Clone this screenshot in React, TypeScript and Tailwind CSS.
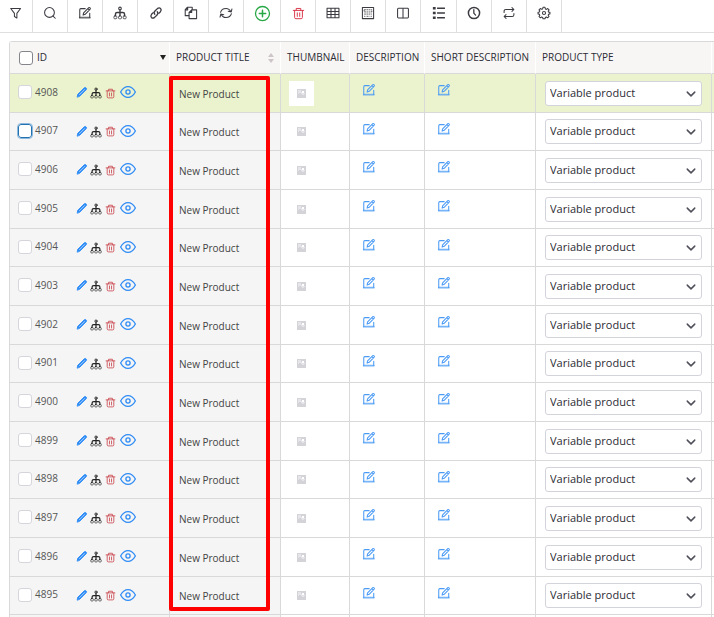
import type { ReactNode } from "react";
import clsx from "clsx";

interface IconProps {
  className?: string;
  children: ReactNode;
}

/** Line icon on a 16px grid, coloured by the current text colour. */
function Icon({ className, children }: IconProps) {
  return (
    <svg
      viewBox="0 0 16 16"
      fill="none"
      stroke="currentColor"
      strokeWidth={1.2}
      strokeLinecap="round"
      strokeLinejoin="round"
      aria-hidden="true"
      className={clsx("shrink-0", className)}
    >
      {children}
    </svg>
  );
}

const editPaths = (
  <>
    <path d="M8.2 3H3.2Q2 3 2 4.2V13M13.4 8.2V13" />
    <path d="M2 13.4H13.4" strokeWidth={2} opacity={0.75} />
    <path d="M5.8 10.4L6.4 7.8L12.3 1.9Q13 1.3 13.8 2.1Q14.5 2.8 13.9 3.6L8.2 9.5Z M11.3 3L13 4.6" />
  </>
);

const sitemapPaths = (
  <>
    <circle cx="8" cy="2.8" r="1.5" />
    <path d="M8 4.4V11M2.8 11V9.2Q2.8 7.4 4.8 7.4H11.2Q13.2 7.4 13.2 9.2V11" strokeWidth={1.6} />
    <rect x="1" y="11.4" width="3.4" height="3.2" rx="1" strokeWidth={0.9} />
    <rect x="6.3" y="11.4" width="3.4" height="3.2" rx="1" strokeWidth={0.9} />
    <rect x="11.6" y="11.4" width="3.4" height="3.2" rx="1" strokeWidth={0.9} />
  </>
);

const trashPaths = (
  <>
    <path d="M1.6 4.2H14.4M5.2 4V1.8H10.8V4" />
    <path d="M3.2 4.4V12.8Q3.2 14.4 4.8 14.4H11.2Q12.8 14.4 12.8 12.8V4.4M6.5 7.2V11.6M9.5 7.2V11.6" />
  </>
);

interface Tool {
  label: string;
  width: string;
  icon: ReactNode;
  color?: string;
  size?: string;
}

const tools: Tool[] = [
  { label: "Filter", width: "w-[33px]", icon: <path d="M2 2.8H13.2L9 8.4V13.8L6.2 12V8.4Z" /> },
  {
    label: "Search",
    width: "w-[35px]",
    icon: (
      <>
        <circle cx="7.4" cy="7.4" r="5.6" />
        <path d="M11.5 11.5L14 14" />
      </>
    ),
  },
  { label: "Edit", width: "w-[35px]", icon: editPaths },
  { label: "Variations", width: "w-[35px]", icon: sitemapPaths },
  {
    label: "Link",
    width: "w-[36px]",
    icon: (
      <>
        <path d="M6.6 9.4Q5 7.6 6.8 5.8L9.6 3Q11.6 1.4 13.2 2.9Q14.7 4.5 13.1 6.5L11.2 8.4" strokeWidth={1.5} />
        <path d="M9.4 6.6Q11 8.4 9.2 10.2L6.4 13Q4.4 14.6 2.8 13.1Q1.3 11.5 2.9 9.5L4.8 7.6" strokeWidth={1.5} />
      </>
    ),
  },
  {
    label: "Copy",
    width: "w-[35px]",
    icon: (
      <>
        <path d="M5.6 11H1.4V4.2L4 1.4H9.4V4M4.2 1.6V4.4H1.6" />
        <path d="M5.8 7.2L8.8 4.4H14.4V14.4H5.8ZM8.8 4.6V7.4H6" />
      </>
    ),
  },
  {
    label: "Refresh",
    width: "w-[35px]",
    icon: (
      <>
        <path d="M1.8 7.2Q3 2.8 8 2.8Q11.8 2.8 13.6 6.6M14.8 3.4L14 6.8L10.6 6" />
        <path d="M14.2 8.8Q13 13.2 8 13.2Q4.2 13.2 2.4 9.4M1.2 12.6L2 9.2L5.4 10" />
      </>
    ),
  },
  {
    label: "Add",
    width: "w-[37px]",
    color: "text-[#28a745]",
    size: "size-[17px]",
    icon: (
      <>
        <circle cx="8" cy="8" r="6.6" />
        <path d="M8 5V11M5 8H11" strokeWidth={1.4} />
      </>
    ),
  },
  { label: "Delete", width: "w-[35px]", color: "text-[#d9364a]", size: "size-[13px]", icon: trashPaths },
  {
    label: "Grid",
    width: "w-[35px]",
    icon: <path d="M1.2 2.5H14.8V13.5H1.2ZM1.2 6.2H14.8M1.2 9.8H14.8M5.7 2.5V13.5M10.3 2.5V13.5" />,
  },
  {
    label: "Form",
    width: "w-[35px]",
    icon: (
      <>
        <rect x="1.6" y="1.6" width="12.8" height="12.8" />
        <path
          d="M3.6 4.3H12.4M3.6 4.3V6.8H12.4V4.3M3.6 9.2H12.4M3.6 11.8H5M6.4 11.8H9.6M11 11.8H12.4"
          strokeWidth={0.9}
          strokeLinecap="butt"
          strokeDasharray="2 0.6"
        />
      </>
    ),
  },
  {
    label: "Columns",
    width: "w-[35px]",
    icon: (
      <>
        <rect x="1.8" y="2.6" width="12.4" height="11" rx="1" />
        <path d="M8 3V13.4" />
      </>
    ),
  },
  {
    label: "List",
    width: "w-[36px]",
    icon: (
      <>
        <path d="M1 2.6H4.2M1 8H4.2M1 13.4H4.2" strokeWidth={2.8} strokeLinecap="butt" />
        <path d="M5.8 2.6H14.8M5.8 8H14.8M5.8 13.4H14.8" strokeWidth={1.5} strokeLinecap="butt" />
      </>
    ),
  },
  {
    label: "History",
    width: "w-[35px]",
    icon: (
      <>
        <circle cx="8" cy="8" r="6.4" strokeWidth={1.7} />
        <path d="M7.8 4.2V8.2L9.8 10.4" strokeWidth={1.5} />
      </>
    ),
  },
  {
    label: "Swap",
    width: "w-[35px]",
    icon: (
      <>
        <path d="M2.4 7.4V6Q2.4 4 4.4 4H13.4M11.4 1.8L13.6 4L11.4 6.2" />
        <path d="M13.6 8.6V10Q13.6 12 11.6 12H2.6M4.6 9.8L2.4 12L4.6 14.2" />
      </>
    ),
  },
  {
    label: "Settings",
    width: "w-[35px]",
    icon: (
      <>
        <path d="M6.9 1.5H9.1L9.6 3.4L10.7 3.9L12.3 2.9L13.8 4.4L12.8 6L13.3 7L14.8 7.2V9L13.3 9.4L12.8 10.5L13.7 12L12.2 13.5L10.7 12.6L9.6 13.1L9.1 14.6H6.9L6.4 13.1L5.3 12.6L3.8 13.5L2.3 12L3.2 10.5L2.7 9.4L1.2 9V7.2L2.7 6.8L3.2 5.8L2.3 4.4L3.8 2.9L5.3 3.8L6.4 3.4Z" />
        <circle cx="8" cy="8" r="1.8" />
      </>
    ),
  },
];

const products = [4908, 4907, 4906, 4905, 4904, 4903, 4902, 4901, 4900, 4899, 4898, 4897, 4896, 4895];

function Toolbar() {
  return (
    <div role="toolbar" className="flex h-[33px] border-b border-[#dfdfdf]">
      {tools.map(({ label, width, icon, color, size }) => (
        <button
          key={label}
          type="button"
          title={label}
          aria-label={label}
          className={clsx(
            "flex shrink-0 items-center justify-center border-r border-[#dfdfdf] pb-[6px]",
            width,
            color ?? "text-[#3b3b42]",
          )}
        >
          <Icon className={size ?? "size-[14px]"}>{icon}</Icon>
        </button>
      ))}
    </div>
  );
}

function RowActions() {
  return (
    <div className="ml-[18px] flex items-center text-[#2f8cf5]">
      <button type="button" aria-label="Rename">
        <Icon className="size-3">
          <path d="M1.6 14.4L2.4 11L11 2.4Q12.2 1.4 13.5 2.6Q14.7 3.8 13.6 5L5 13.6Z" fill="currentColor" />
          <path d="M4.6 11.6L11.4 4.8" stroke="#a9d2ff" />
        </Icon>
      </button>
      <button type="button" aria-label="Variations" className="ml-0.5 pt-0.5 text-[#222]">
        <Icon className="size-3">{sitemapPaths}</Icon>
      </button>
      <button type="button" aria-label="Delete" className="ml-[3px] pt-0.5 text-[#c9444b]">
        <Icon className="size-[11px]">{trashPaths}</Icon>
      </button>
      <button type="button" aria-label="View" className="ml-1">
        <Icon className="size-4">
          <path d="M.6 8Q3.6 2.6 8 2.6T15.4 8Q12.4 13.4 8 13.4T.6 8Z" strokeWidth={1.3} />
          <circle cx="8" cy="8" r="2.1" strokeWidth={1.3} />
        </Icon>
      </button>
    </div>
  );
}

function EditButton({ label }: { label: string }) {
  return (
    <button type="button" aria-label={label} className="ml-3 block pb-[6px] text-[#4b9bf5]">
      <Icon className="size-[14px]">{editPaths}</Icon>
    </button>
  );
}

const th =
  "border-r border-b border-r-white border-b-[#d9d9d9] bg-[#f7f6f5] p-0 text-left font-medium whitespace-nowrap";
const td = "border-r border-b border-[#d9d9d9] p-0";

function ProductRow({ id, highlighted, focused }: { id: number; highlighted: boolean; focused: boolean }) {
  return (
    <tr className={clsx("h-[39px] nth-[3n+2]:h-[38px]", highlighted && "bg-[#eaf3cd]")}>
      <td className={clsx(td, !highlighted && "bg-[#f5f5f5]")}>
        <div className="flex items-center pb-[2px] pl-2">
          <label className="flex items-center gap-[3px] text-[10px] text-[#555]">
            <input
              type="checkbox"
              className={clsx(
                "size-[14px] appearance-none rounded-[3px] border bg-white",
                focused ? "border-[#2271b1] outline outline-[#8bb8dc]" : "border-[#d5d5dc]",
              )}
            />
            {id}
          </label>
          <RowActions />
        </div>
      </td>
      <td className={clsx(td, "pt-[2px] pl-[9px] text-[10px] text-[#444]", !highlighted && "bg-[#f5f5f5]")}>
        New Product
      </td>
      <td className={td}>
        <div className="ml-2 flex size-[25px] items-center justify-center bg-white">
          <svg viewBox="0 0 9 9" className="size-[9px]" role="img" aria-label="No thumbnail">
            <rect width="9" height="9" fill="#d3d3d8" />
            <path d="M1 7V5H2V4H4V5H5V6H7V5H8V4H6V3H7V2H5V3H4V1H1Z" fill="#f3f3f6" opacity="0.6" />
            <rect x="5" y="2" width="2" height="2" fill="#fff" />
          </svg>
        </div>
      </td>
      <td className={td}>
        <EditButton label="Edit description" />
      </td>
      <td className={td}>
        <EditButton label="Edit short description" />
      </td>
      <td className={td}>
        <div className="relative mx-[9px]">
          <select
            aria-label={`Product type of ${id}`}
            className="block h-[25px] w-full appearance-none rounded-[3px] border border-[#d3d3db] bg-white pl-1 text-[11px] text-[#2c2c34]"
          >
            <option>Variable product</option>
            <option>Simple product</option>
          </select>
          <Icon className="pointer-events-none absolute top-2 right-[6px] size-[10px] text-[#50505a]">
            <path d="M2 5L8 11L14 5" strokeWidth={2.4} />
          </Icon>
        </div>
      </td>
      <td className="border-b border-[#d9d9d9] p-0" />
    </tr>
  );
}

export default function App() {
  return (
    <div className="overflow-hidden bg-white font-['Open_Sans','Noto_Sans',sans-serif] text-[#333]">
      <Toolbar />
      <div className="relative mt-2 ml-[9px] rounded-tl-[3px] border-t border-l border-[#d9d9d9]">
        <table className="w-full table-fixed border-separate border-spacing-0">
          <colgroup>
            <col className="w-[160px]" />
            <col className="w-[111px]" />
            <col className="w-[69px]" />
            <col className="w-[75px]" />
            <col className="w-[111px]" />
            <col className="w-[176px]" />
            <col />
          </colgroup>
          <thead className="text-[10px] text-[#2c2c34]">
            <tr className="h-8">
              <th className={th}>
                <div className="flex items-center pr-[3px] pl-[9px]">
                  <label className="flex flex-1 items-center gap-1">
                    <input
                      type="checkbox"
                      className="size-[14px] appearance-none rounded-[3px] border border-[#85858c] bg-white"
                    />
                    ID
                  </label>
                  <svg viewBox="0 0 6 5" className="h-[5px] w-[6px]" aria-hidden="true">
                    <path d="M0 0H6L3 5Z" fill="#222" />
                  </svg>
                </div>
              </th>
              <th className={th}>
                <div className="flex items-center justify-between pr-[6px] pl-[6px]">
                  PRODUCT TITLE
                  <svg viewBox="0 0 6 10" className="h-[10px] w-[6px]" aria-hidden="true">
                    <path d="M0 4L3 0L6 4ZM0 6H6L3 10Z" fill="#cdc5c7" />
                  </svg>
                </div>
              </th>
              <th className={clsx(th, "pl-[6px]")}>THUMBNAIL</th>
              <th className={clsx(th, "pl-[6px]")}>DESCRIPTION</th>
              <th className={clsx(th, "pl-[6px]")}>SHORT DESCRIPTION</th>
              <th className={clsx(th, "pl-[6px]")}>PRODUCT TYPE</th>
              <th className="border-b border-[#d9d9d9] bg-[#f7f6f5] p-0" />
            </tr>
          </thead>
          <tbody>
            {products.map((id, index) => (
              <ProductRow key={id} id={id} highlighted={index === 0} focused={index === 1} />
            ))}
          </tbody>
          <tfoot>
            <tr className="h-0.5">
              <td className="border-r border-[#d9d9d9] bg-[#f5f5f5] p-0" />
              <td className="border-r border-[#d9d9d9] bg-[#f5f5f5] p-0" />
              <td className="border-r border-[#d9d9d9] p-0" />
              <td className="border-r border-[#d9d9d9] p-0" />
              <td className="border-r border-[#d9d9d9] p-0" />
              <td className="border-r border-[#d9d9d9] p-0" />
              <td className="p-0" />
            </tr>
          </tfoot>
        </table>
        {/* Marks the product title column */}
        <div className="pointer-events-none absolute top-[34px] bottom-[6px] left-[159px] w-[101px] rounded-[2px] border-4 border-[#ff0000]" />
      </div>
    </div>
  );
}
